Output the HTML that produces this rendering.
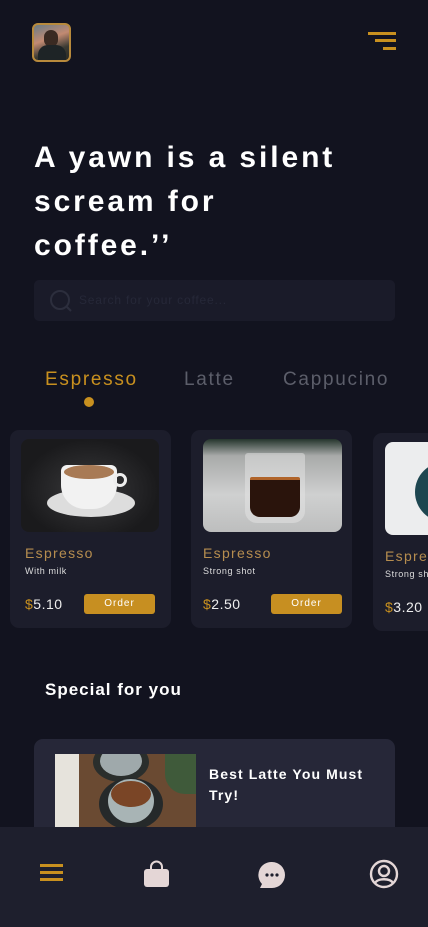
<!DOCTYPE html>
<html><head><meta charset="utf-8"><style>
*{margin:0;padding:0;box-sizing:border-box}
body{width:428px;height:927px;background:#12131f;font-family:"Liberation Sans",sans-serif;position:relative;overflow:hidden;color:#fff}
.abs{position:absolute;white-space:nowrap}
.h1{left:34px;top:136px;font-size:30px;font-weight:bold;letter-spacing:2.9px;line-height:44px;color:#fff}
.card{background:#1c1d2b;border-radius:9px}
.nm{font-size:14px;color:#b68d4f;letter-spacing:1.3px}
.sub{font-size:9px;color:#ddd;letter-spacing:.6px}
.pr{font-size:14px;color:#eee;letter-spacing:.5px}
.pr b{color:#c8901f;font-weight:normal}
.btn{background:#c78f21;border-radius:3px;font-size:10px;color:#fff;text-align:center;line-height:20px;letter-spacing:1px;width:71px;height:20px}
.tab{font-size:19px;letter-spacing:1.7px;top:369px}
</style></head><body>
<div class="abs" style="left:32px;top:23px;width:39px;height:39px;border:2px solid #b88a3c;border-radius:6px;background:linear-gradient(160deg,#6a7c86,#c28a72 40%,#3b3a33 70%,#2a2a22);overflow:hidden">
<div class="abs" style="left:10px;top:5px;width:14px;height:17px;border-radius:7px;background:#3a2a22"></div>
<div class="abs" style="left:4px;top:20px;width:28px;height:20px;border-radius:10px 10px 0 0;background:#1e2426"></div></div>
<svg class="abs" style="left:367px;top:32px" width="30" height="20"><rect x="1" y="0" width="28" height="3" fill="#c8901f"/><rect x="8" y="7" width="21" height="3" fill="#c8901f"/><rect x="16" y="15" width="13" height="3" fill="#c8901f"/></svg>
<div class="abs h1">A yawn is a silent<br>scream for<br>coffee.’’</div>
<div class="abs" style="left:34px;top:280px;width:361px;height:41px;background:#1a1b29;border-radius:5px"></div>
<svg class="abs" style="left:49px;top:289px" width="24" height="24"><circle cx="11" cy="11" r="9" fill="none" stroke="#2c2e3d" stroke-width="2"/><path d="M17 17l5 5" stroke="#2c2e3d" stroke-width="2"/></svg>
<div class="abs" style="left:79px;top:293px;font-size:12px;color:#262838;letter-spacing:.8px">Search for your coffee...</div>
<div class="abs tab" style="left:45px;color:#c8901f">Espresso</div>
<div class="abs tab" style="left:184px;color:#5c5e6a">Latte</div>
<div class="abs tab" style="left:283px;color:#5c5e6a">Cappucino</div>
<div class="abs" style="left:84px;top:397px;width:10px;height:10px;border-radius:5px;background:#c8901f"></div>

<div class="abs card" style="left:10px;top:430px;width:161px;height:198px"></div>
<div class="abs" style="left:21px;top:439px;width:138px;height:93px;border-radius:8px;background:radial-gradient(ellipse at 50% 55%,#3a3a3c 0%,#1a1a1c 70%)">
<div class="abs" style="left:26px;top:50px;width:88px;height:28px;border-radius:50%;background:#ddd"></div>
<div class="abs" style="left:40px;top:26px;width:56px;height:44px;border-radius:6px 6px 24px 24px;background:#f2f2f2"></div>
<div class="abs" style="left:43px;top:26px;width:50px;height:14px;border-radius:50%;background:#a87a55"></div>
<div class="abs" style="left:92px;top:34px;width:14px;height:14px;border-radius:7px;border:3px solid #eee"></div></div>
<div class="abs nm" style="left:25px;top:545px">Espresso</div>
<div class="abs sub" style="left:25px;top:566px">With milk</div>
<div class="abs pr" style="left:25px;top:596px"><b>$</b>5.10</div>
<div class="abs btn" style="left:84px;top:594px">Order</div>

<div class="abs card" style="left:191px;top:430px;width:161px;height:198px"></div>
<div class="abs" style="left:203px;top:439px;width:139px;height:93px;border-radius:8px;background:linear-gradient(#24352c 0%,#a8aaa9 18%,#cfd0d0 60%,#bdbebe)">
<div class="abs" style="left:42px;top:14px;width:60px;height:70px;border-radius:3px 3px 12px 12px;background:rgba(230,230,230,.5)"></div>
<div class="abs" style="left:47px;top:38px;width:50px;height:40px;border-radius:2px 2px 10px 10px;background:#2a140c;border-top:3px solid #b0642a"></div></div>
<div class="abs nm" style="left:203px;top:545px">Espresso</div>
<div class="abs sub" style="left:203px;top:566px">Strong shot</div>
<div class="abs pr" style="left:203px;top:596px"><b>$</b>2.50</div>
<div class="abs btn" style="left:271px;top:594px">Order</div>

<div class="abs" style="left:373px;top:433px;width:55px;height:198px;overflow:hidden">
<div class="abs card" style="left:0;top:0;width:100px;height:198px"></div>
<div class="abs" style="left:12px;top:9px;width:60px;height:93px;border-radius:8px;background:#ecedee;overflow:hidden"><div class="abs" style="left:30px;top:20px;width:60px;height:60px;border-radius:30px;background:#1d4650"></div></div>
<div class="abs nm" style="left:12px;top:115px">Espresso</div>
<div class="abs sub" style="left:12px;top:136px">Strong shot</div>
<div class="abs pr" style="left:12px;top:166px"><b>$</b>3.20</div>
</div>

<div class="abs" style="left:45px;top:680px;font-size:17px;font-weight:bold;letter-spacing:1px">Special for you</div>
<div class="abs" style="left:34px;top:739px;width:361px;height:120px;background:#262738;border-radius:9px"></div>
<div class="abs" style="left:55px;top:754px;width:141px;height:73px;background:#6a4a32;overflow:hidden">
<div class="abs" style="left:-6px;top:-4px;width:30px;height:80px;background:#e6e3dc"></div>
<div class="abs" style="left:38px;top:-12px;width:56px;height:40px;border-radius:50%;background:#2a2e2c"></div>
<div class="abs" style="left:45px;top:-8px;width:42px;height:30px;border-radius:50%;background:#9fa9ab"></div>
<div class="abs" style="left:44px;top:24px;width:64px;height:52px;border-radius:50%;background:#25292a"></div>
<div class="abs" style="left:53px;top:25px;width:46px;height:44px;border-radius:50%;background:#a8b4b5"></div>
<div class="abs" style="left:56px;top:27px;width:40px;height:26px;border-radius:50%;background:#7a4526"></div>
<div class="abs" style="left:110px;top:0;width:32px;height:40px;background:#3f5a3a;border-radius:0 0 0 20px"></div></div>
<div class="abs" style="left:209px;top:764px;font-size:14px;font-weight:bold;letter-spacing:1.1px;line-height:21px">Best Latte You Must<br>Try!</div>

<div class="abs" style="left:0;top:827px;width:428px;height:100px;background:#1e1f2d"></div>
<svg class="abs" style="left:40px;top:864px" width="24" height="20"><rect x="0" y="0" width="23" height="3" fill="#c8901f"/><rect x="0" y="7" width="23" height="3" fill="#c8901f"/><rect x="0" y="14" width="23" height="3" fill="#c8901f"/></svg>
<svg class="abs" style="left:143px;top:860px" width="27" height="28"><path d="M8 9V7a5.5 5.5 0 0111 0v2" fill="none" stroke="#e4d6d6" stroke-width="2"/><rect x="1" y="9" width="25" height="18" rx="3" fill="#e4d6d6"/></svg>
<svg class="abs" style="left:258px;top:861px" width="28" height="28"><path d="M14 1a13 13 0 110 26H2l2-4A13 13 0 0114 1z" fill="#e4d6d6"/><circle cx="9" cy="14" r="1.6" fill="#1e1f2d"/><circle cx="14" cy="14" r="1.6" fill="#1e1f2d"/><circle cx="19" cy="14" r="1.6" fill="#1e1f2d"/></svg>
<svg class="abs" style="left:369px;top:859px" width="30" height="30"><circle cx="15" cy="15" r="13" fill="none" stroke="#e4d6d6" stroke-width="2.4"/><circle cx="15" cy="12" r="5" fill="none" stroke="#e4d6d6" stroke-width="2.4"/><path d="M6 24c3-5 15-5 18 0" fill="none" stroke="#e4d6d6" stroke-width="2.4"/></svg>
</body></html>
